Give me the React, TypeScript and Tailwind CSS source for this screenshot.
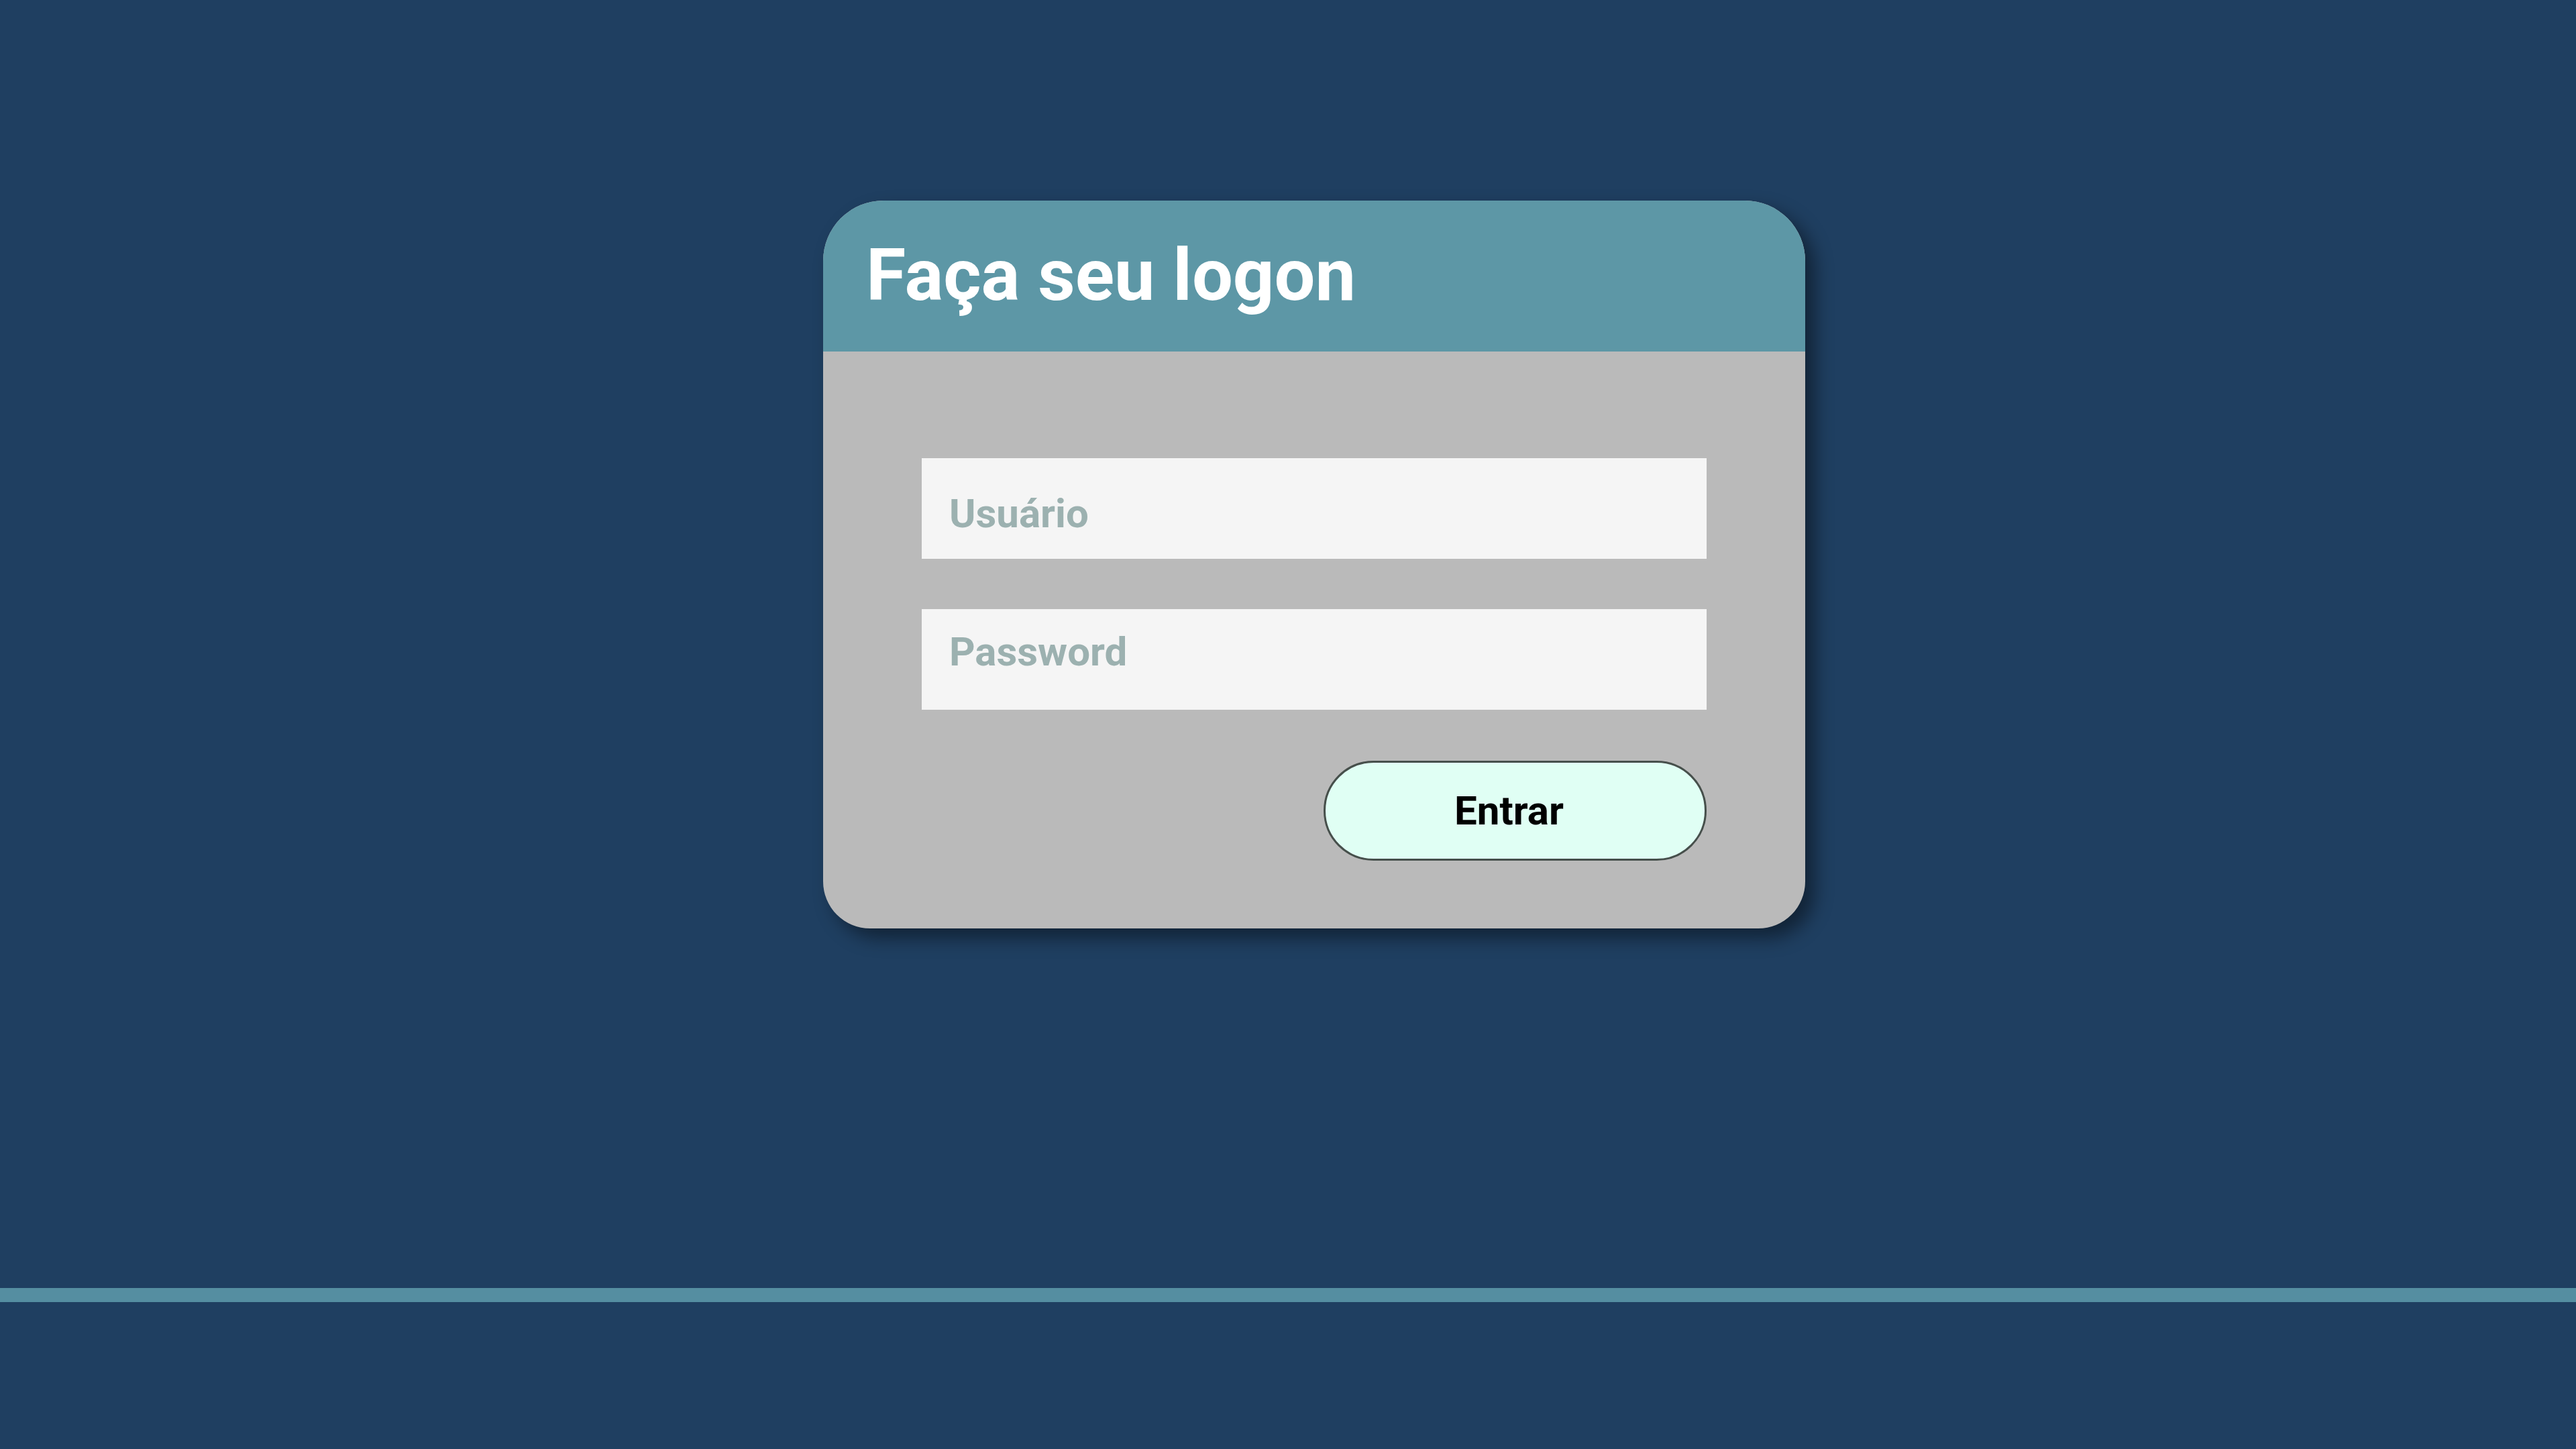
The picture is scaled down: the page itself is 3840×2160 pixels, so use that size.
export default function App() {
  return (
    <div className="flex h-[2160px] w-full flex-col bg-[#1f3f61] font-['Roboto',sans-serif]">
      <main className="h-[1920px] pl-[1227px] pt-[299px]">
        <div className="w-[1464px] overflow-hidden rounded-t-[90px] rounded-b-[70px] bg-[#bababa] shadow-[14px_14px_28px_rgba(0,0,0,0.45)]">
          <div className="flex h-[225px] items-center bg-[#5d97a6] pl-[64px] pb-[4px]">
            <h1 className="text-[108px] font-bold leading-none text-white">Faça seu logon</h1>
          </div>

          <form className="flex flex-col px-[147px] pt-[159px] pb-[101px]">
            <input
              type="text"
              placeholder="Usuário"
              className="h-[150px] w-full bg-[#f5f5f5] px-[41px] pt-[14px] text-[60px] font-bold text-[#333] outline-none placeholder:text-[#9cb1b0]"
            />
            <input
              type="password"
              placeholder="Password"
              className="mt-[75px] h-[150px] w-full bg-[#f5f5f5] px-[41px] pb-[24px] text-[60px] font-bold text-[#333] outline-none placeholder:text-[#9cb1b0]"
            />
            <div className="mt-[76px] flex justify-end">
              <button
                type="button"
                className="h-[149px] w-[571px] rounded-full border-[3px] border-[#464f4b] bg-[#e0fff4] pr-[18px] text-[60px] font-bold text-black"
              >
                Entrar
              </button>
            </div>
          </form>
        </div>
      </main>

      <footer className="h-[21px] bg-[#558ea1]" />
      <div className="flex-1" />
    </div>
  )
}
